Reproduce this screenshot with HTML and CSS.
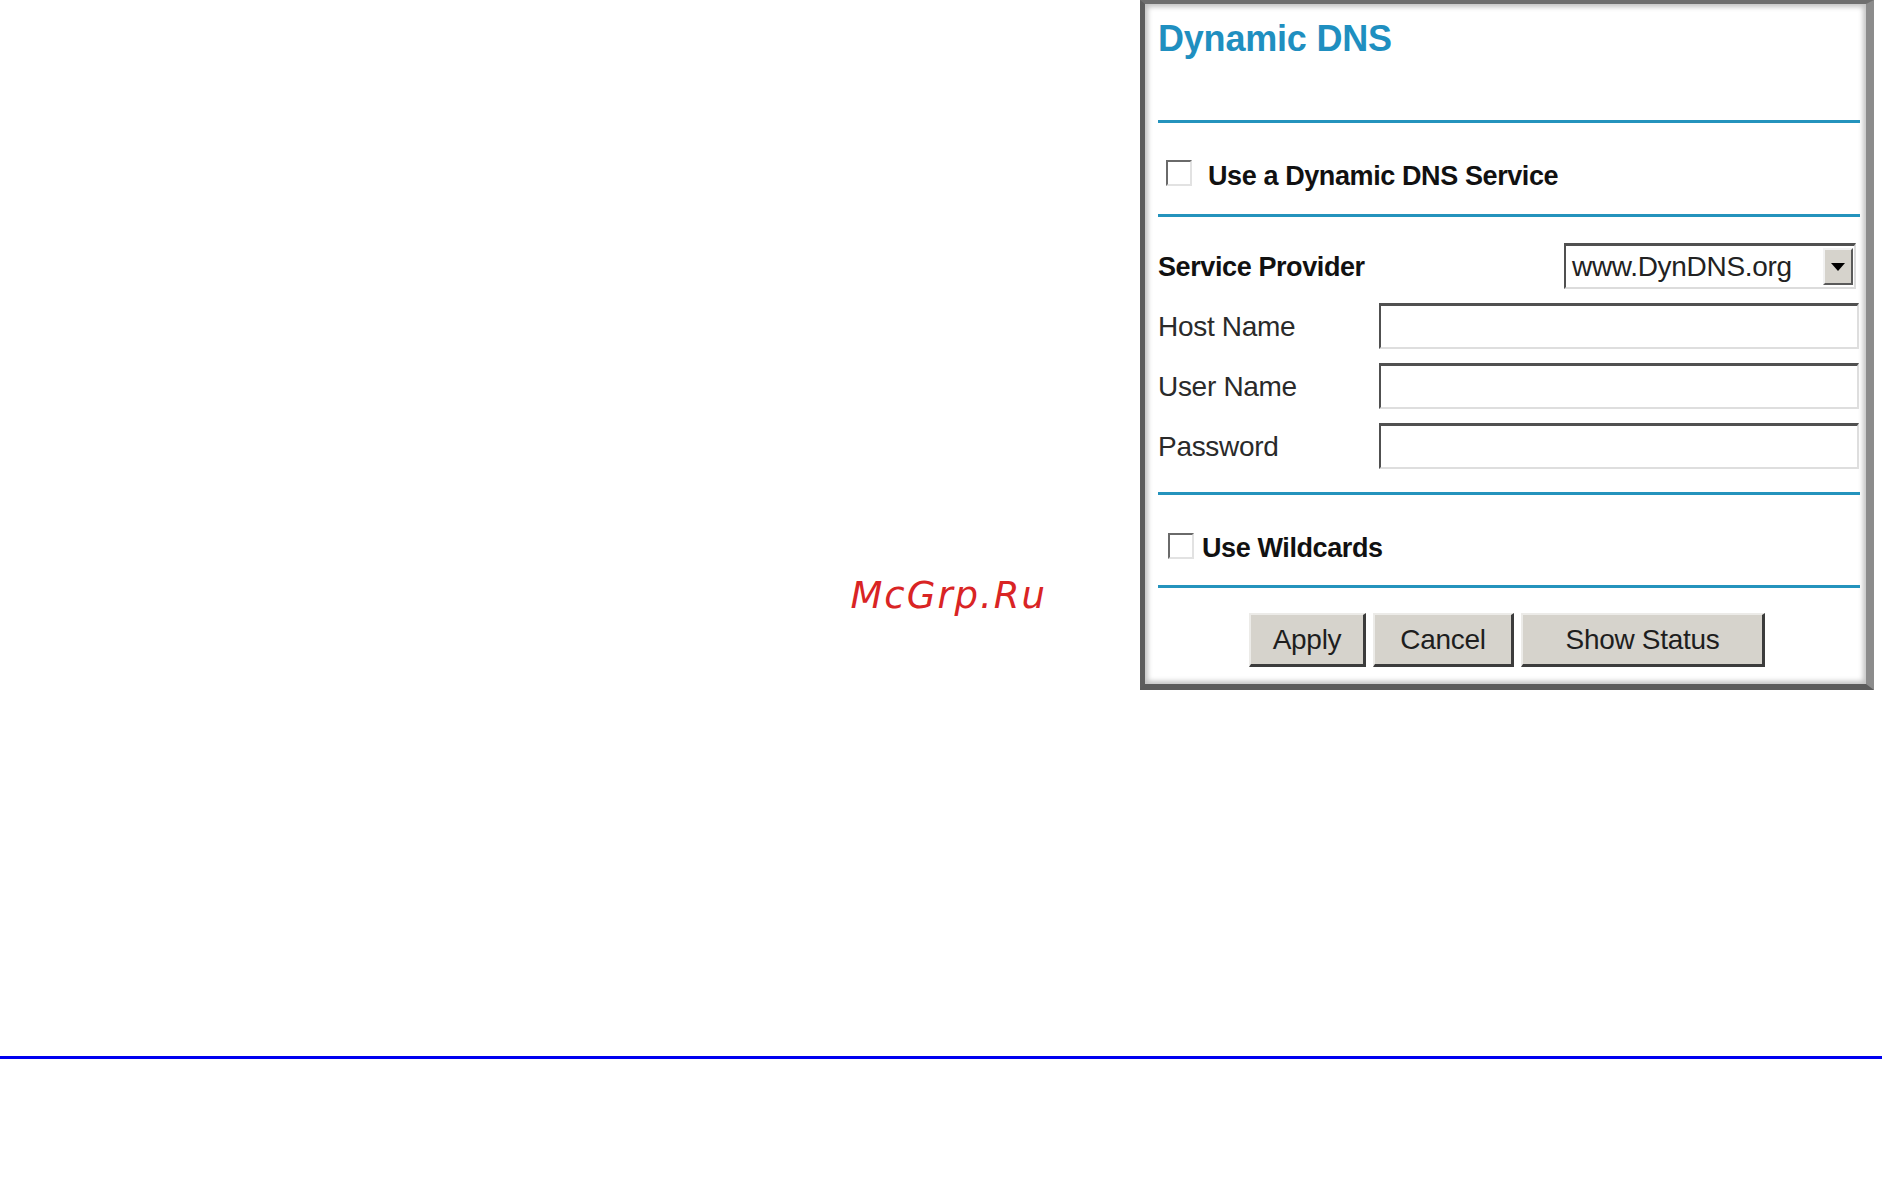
FILE: index.html
```html
<!DOCTYPE html>
<html>
<head>
<meta charset="utf-8">
<title>Dynamic DNS</title>
<link rel="stylesheet" href="styles.css">
</head>
<body>
<div class="page">
  <div class="top">
    <div class="left">
      <div class="watermark">McGrp.Ru</div>
    </div>
    <div class="panel">
      <div class="head">
        <h1 class="title">Dynamic DNS</h1>
      </div>
      <div class="sep"></div>
      <label class="check-row first">
        <span class="checkbox"></span>
        <span class="check-label">Use a Dynamic DNS Service</span>
      </label>
      <div class="sep"></div>
      <div class="fields">
        <div class="row provider">
          <span class="label bold">Service Provider</span>
          <div class="select">
            <span class="select-value">www.DynDNS.org</span>
            <span class="select-btn"><svg width="14" height="8" viewBox="0 0 14 8"><path d="M0 0H14L7 8Z" fill="#000"/></svg></span>
          </div>
        </div>
        <div class="row">
          <span class="label">Host Name</span>
          <div class="text-input"></div>
        </div>
        <div class="row">
          <span class="label">User Name</span>
          <div class="text-input"></div>
        </div>
        <div class="row">
          <span class="label">Password</span>
          <div class="text-input"></div>
        </div>
      </div>
      <div class="sep"></div>
      <label class="check-row second">
        <span class="checkbox"></span>
        <span class="check-label tight">Use Wildcards</span>
      </label>
      <div class="sep"></div>
      <div class="buttons">
        <span class="btn apply">Apply</span>
        <span class="btn cancel">Cancel</span>
        <span class="btn status">Show Status</span>
      </div>
    </div>
  </div>
  <div class="rule"></div>
</div>
</body>
</html>
```
FILE: styles.css
```css
html, body {
  margin: 0;
  padding: 0;
  background: #ffffff;
}

body {
  font-family: "Liberation Sans", Arial, sans-serif;
  color: #1a1a1a;
}

.page {
  display: flex;
  flex-direction: column;
  width: 1882px;
}

.top {
  display: flex;
  height: 690px;
}

.left {
  width: 1140px;
  box-sizing: border-box;
  display: flex;
  align-items: flex-end;
  justify-content: flex-end;
  padding-right: 93px;
  padding-bottom: 73px;
}

.watermark {
  font-family: "DejaVu Sans", sans-serif;
  font-style: italic;
  font-size: 37px;
  letter-spacing: 2px;
  color: #d92424;
}

.panel {
  width: 734px;
  height: 690px;
  box-sizing: border-box;
  border-style: solid;
  border-width: 4px 8px 6px 5px;
  border-color: #6f6f6f #8c8c8c #5c5c5c #5e5e5e;
  box-shadow: inset 0 0 5px 3px #c4c4c4;
  background: #ffffff;
  padding: 0 5px 0 13px;
  display: flex;
  flex-direction: column;
}

.head {
  height: 116px;
  box-sizing: border-box;
  padding-top: 17px;
}

.title {
  margin: 0;
  font-size: 36px;
  line-height: 36px;
  font-weight: bold;
  color: #1f8fc0;
  letter-spacing: -0.2px;
}

.sep {
  height: 3px;
  background: #2493bd;
  margin-right: 1px;
}

.check-row {
  display: flex;
  align-items: center;
  box-sizing: border-box;
}

.check-row.first {
  height: 91px;
  padding-top: 9px;
  padding-left: 8px;
}

.check-row.second {
  height: 90px;
  padding-top: 12px;
  padding-left: 10px;
}

.checkbox {
  width: 22px;
  height: 22px;
  box-sizing: content-box;
  border-style: solid;
  border-width: 2px;
  border-color: #6a6a6a #e2e2e2 #e2e2e2 #6a6a6a;
  background: #ffffff;
  flex: none;
}

.check-label {
  font-size: 27px;
  font-weight: bold;
  color: #111111;
  margin-left: 16px;
  margin-top: 6px;
  letter-spacing: -0.4px;
}

.check-label.tight {
  margin-left: 8px;
  margin-top: 4px;
}

.fields {
  display: flex;
  flex-direction: column;
  gap: 14px;
  padding-top: 26px;
  padding-bottom: 23px;
}

.row {
  display: flex;
  align-items: center;
  height: 46px;
}

.label {
  width: 221px;
  flex: none;
  font-size: 28px;
  color: #2a2a2a;
  letter-spacing: -0.3px;
  margin-top: 2px;
}

.label.bold {
  font-weight: bold;
  font-size: 27px;
  color: #111111;
  width: auto;
  flex: 1;
  letter-spacing: -0.4px;
}

.provider {
  height: 46px;
}

.select {
  width: 292px;
  height: 46px;
  box-sizing: border-box;
  margin-right: 5px;
  border-style: solid;
  border-width: 3px 2px 2px 2px;
  border-color: #505050 #dcdcdc #dcdcdc #505050;
  display: flex;
  align-items: center;
  background: #ffffff;
}

.select-value {
  flex: 1;
  padding-left: 6px;
  font-size: 28px;
  color: #222222;
  letter-spacing: -0.3px;
}

.select-btn {
  width: 30px;
  height: 37px;
  box-sizing: border-box;
  margin-right: 1px;
  background: #d6d3cc;
  border-style: solid;
  border-width: 2px;
  border-color: #f2f2f2 #5a5a5a #5a5a5a #f2f2f2;
  display: flex;
  align-items: center;
  justify-content: center;
}

.text-input {
  flex: 1;
  height: 46px;
  box-sizing: border-box;
  margin-right: 2px;
  border-style: solid;
  border-width: 3px 2px 2px 2px;
  border-color: #505050 #dedede #dedede #505050;
  background: #ffffff;
}

.buttons {
  display: flex;
  justify-content: center;
  gap: 7px;
  padding-top: 25px;
  padding-right: 5px;
}

.btn {
  height: 54px;
  box-sizing: border-box;
  display: flex;
  align-items: center;
  justify-content: center;
  background: #d6d3cc;
  border-style: solid;
  border-width: 2px 3px 3px 2px;
  border-color: #ecebe8 #3c3c3c #3c3c3c #ecebe8;
  font-size: 28px;
  color: #1e1e1e;
  letter-spacing: -0.3px;
}

.btn.apply {
  width: 117px;
}

.btn.cancel {
  width: 141px;
}

.btn.status {
  width: 244px;
}

.rule {
  margin-top: 366px;
  height: 3px;
  background: #0000f0;
}
```
